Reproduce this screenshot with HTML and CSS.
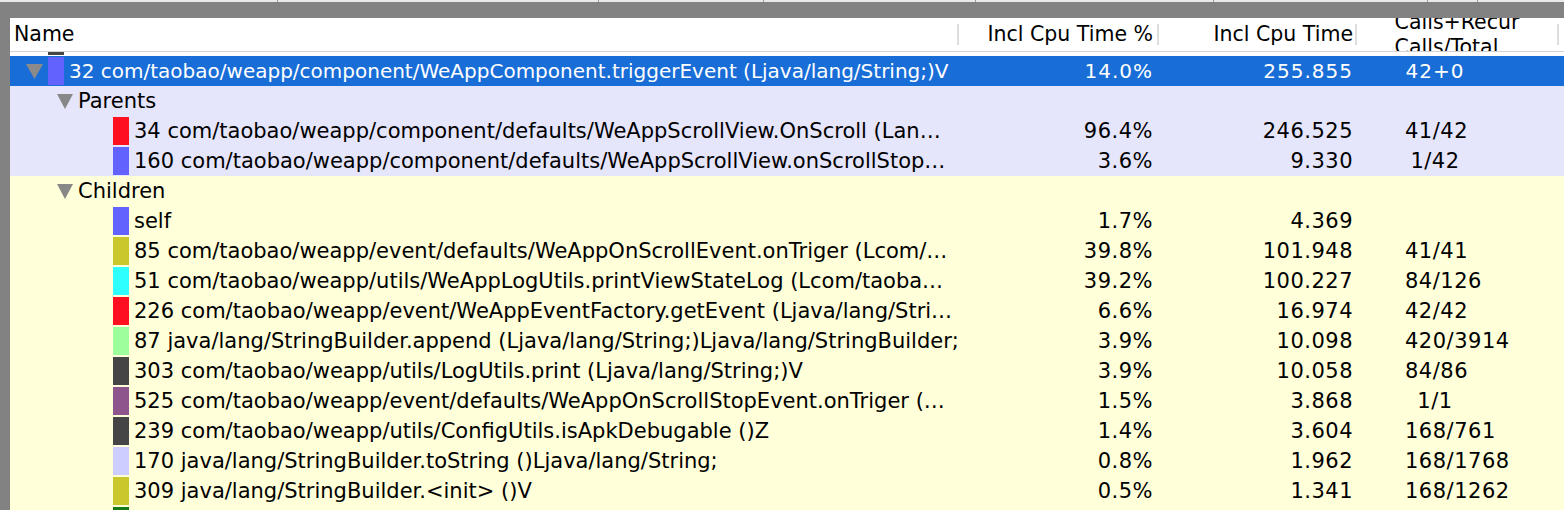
FILE: index.html
```html
<!DOCTYPE html>
<html>
<head>
<meta charset="utf-8">
<link rel="stylesheet" href="styles.css">
</head>
<body>
<div class="window">
  <div class="topstrip">
    <div class="seg s1"></div><div class="seg s2"></div><div class="seg s3"></div><div class="seg s4"></div><div class="seg s5"></div><div class="seg s6"></div><div class="seg s7"></div>
  </div>
  <div class="frame">
    <div class="table">
      <div class="header">
        <div class="hcell hname"><span>Name</span></div>
        <div class="hcell hnum1"><span>Incl Cpu Time %</span></div>
        <div class="hcell hnum2"><span>Incl Cpu Time</span></div>
        <div class="hcell hcalls"><span>Calls+Recur<br>Calls/Total</span></div>
        <div class="hcell hrest"></div>
      </div>
      <div class="body">
        <div class="rows">
          <div class="row plain">
            <div class="name l0"><span class="tog"></span><span class="sw c-dark"></span><span class="txt">28 com/taobao/weapp/component/WeAppComponent.onScrollEvent (Ljava/lang/String;)V</span></div>
            <div class="pct"></div><div class="tm"></div><div class="calls"></div>
          </div>
          <div class="row selected">
            <div class="name l0"><span class="tog"><svg width="17" height="15" viewBox="0 0 17 15"><polygon points="0,0 17,0 8.5,15" fill="#8a8a8a"/></svg></span><span class="sw c-blue"></span><span class="txt">32 com/taobao/weapp/component/WeAppComponent.triggerEvent (Ljava/lang/String;)V</span></div>
            <div class="pct">14.0%</div><div class="tm">255.855</div><div class="calls"><span>42+0</span></div>
          </div>
          <div class="row parents">
            <div class="name l1"><span class="tog"><svg width="16" height="15" viewBox="0 0 16 15"><polygon points="0,0 16,0 8,15" fill="#888888"/></svg></span><span class="txt">Parents</span></div>
            <div class="pct"></div><div class="tm"></div><div class="calls"></div>
          </div>
          <div class="row parents">
            <div class="name l2"><span class="tog"></span><span class="sw c-red"></span><span class="txt">34 com/taobao/weapp/component/defaults/WeAppScrollView.OnScroll (Lan…</span></div>
            <div class="pct">96.4%</div><div class="tm">246.525</div><div class="calls"><span>41/42</span></div>
          </div>
          <div class="row parents">
            <div class="name l2"><span class="tog"></span><span class="sw c-blue"></span><span class="txt">160 com/taobao/weapp/component/defaults/WeAppScrollView.onScrollStop…</span></div>
            <div class="pct">3.6%</div><div class="tm">9.330</div><div class="calls"><span>1/42</span></div>
          </div>
          <div class="row children">
            <div class="name l1"><span class="tog"><svg width="16" height="15" viewBox="0 0 16 15"><polygon points="0,0 16,0 8,15" fill="#888888"/></svg></span><span class="txt">Children</span></div>
            <div class="pct"></div><div class="tm"></div><div class="calls"></div>
          </div>
          <div class="row children">
            <div class="name l2"><span class="tog"></span><span class="sw c-blue"></span><span class="txt">self</span></div>
            <div class="pct">1.7%</div><div class="tm">4.369</div><div class="calls"></div>
          </div>
          <div class="row children">
            <div class="name l2"><span class="tog"></span><span class="sw c-olive"></span><span class="txt">85 com/taobao/weapp/event/defaults/WeAppOnScrollEvent.onTriger (Lcom/…</span></div>
            <div class="pct">39.8%</div><div class="tm">101.948</div><div class="calls"><span>41/41</span></div>
          </div>
          <div class="row children">
            <div class="name l2"><span class="tog"></span><span class="sw c-cyan"></span><span class="txt">51 com/taobao/weapp/utils/WeAppLogUtils.printViewStateLog (Lcom/taoba…</span></div>
            <div class="pct">39.2%</div><div class="tm">100.227</div><div class="calls"><span>84/126</span></div>
          </div>
          <div class="row children">
            <div class="name l2"><span class="tog"></span><span class="sw c-red"></span><span class="txt">226 com/taobao/weapp/event/WeAppEventFactory.getEvent (Ljava/lang/Stri…</span></div>
            <div class="pct">6.6%</div><div class="tm">16.974</div><div class="calls"><span>42/42</span></div>
          </div>
          <div class="row children">
            <div class="name l2"><span class="tog"></span><span class="sw c-mint"></span><span class="txt">87 java/lang/StringBuilder.append (Ljava/lang/String;)Ljava/lang/StringBuilder;</span></div>
            <div class="pct">3.9%</div><div class="tm">10.098</div><div class="calls"><span>420/3914</span></div>
          </div>
          <div class="row children">
            <div class="name l2"><span class="tog"></span><span class="sw c-dark"></span><span class="txt">303 com/taobao/weapp/utils/LogUtils.print (Ljava/lang/String;)V</span></div>
            <div class="pct">3.9%</div><div class="tm">10.058</div><div class="calls"><span>84/86</span></div>
          </div>
          <div class="row children">
            <div class="name l2"><span class="tog"></span><span class="sw c-purple"></span><span class="txt">525 com/taobao/weapp/event/defaults/WeAppOnScrollStopEvent.onTriger (…</span></div>
            <div class="pct">1.5%</div><div class="tm">3.868</div><div class="calls"><span>1/1</span></div>
          </div>
          <div class="row children">
            <div class="name l2"><span class="tog"></span><span class="sw c-dark"></span><span class="txt">239 com/taobao/weapp/utils/ConfigUtils.isApkDebugable ()Z</span></div>
            <div class="pct">1.4%</div><div class="tm">3.604</div><div class="calls"><span>168/761</span></div>
          </div>
          <div class="row children">
            <div class="name l2"><span class="tog"></span><span class="sw c-lilac"></span><span class="txt">170 java/lang/StringBuilder.toString ()Ljava/lang/String;</span></div>
            <div class="pct">0.8%</div><div class="tm">1.962</div><div class="calls"><span>168/1768</span></div>
          </div>
          <div class="row children">
            <div class="name l2"><span class="tog"></span><span class="sw c-olive"></span><span class="txt">309 java/lang/StringBuilder.&lt;init&gt; ()V</span></div>
            <div class="pct">0.5%</div><div class="tm">1.341</div><div class="calls"><span>168/1262</span></div>
          </div>
          <div class="row children">
            <div class="name l2"><span class="tog"></span><span class="sw c-green"></span><span class="txt">44 java/lang/String.length ()I</span></div>
            <div class="pct">0.3%</div><div class="tm">0.812</div><div class="calls"><span>84/900</span></div>
          </div>
        </div>
      </div>
    </div>
  </div>
</div>
</body>
</html>
```
FILE: styles.css
```css
* { box-sizing: border-box; }
html, body { margin: 0; padding: 0; }
body {
  width: 1564px;
  height: 510px;
  overflow: hidden;
  font-family: "DejaVu Sans", "Liberation Sans", sans-serif;
  font-size: 20px;
  color: #000;
  background: #828282;
}
.window {
  height: 510px;
  display: flex;
  flex-direction: column;
}
.topstrip {
  height: 2px;
  display: flex;
  background: #e9e9e9;
}
.seg { height: 2px; border-right: 1px solid #9a9a9a; }
.s1 { width: 278px; }
.s2 { width: 321px; }
.s3 { width: 165px; }
.s4 { width: 212px; }
.s5 { width: 238px; }
.s6 { width: 214px; }
.s7 { width: 50px; }

.frame {
  flex: 1;
  padding: 16px 0 0 10px;
  background: #828282;
  display: flex;
  min-height: 0;
}
.table {
  flex: 1;
  display: flex;
  flex-direction: column;
  min-height: 0;
  background: #fff;
}
.header {
  height: 34px;
  flex: none;
  display: grid;
  grid-template-columns: 949px 200px 198px 202px 1fr;
  grid-template-rows: 33px;
  border-bottom: 1px solid #d2d2d2;
  background: #fff;
  overflow: hidden;
  font-size: 20.5px;
}
.hcell {
  height: 21px;
  margin: 6px 0;
  border-right: 2px solid #dedede;
  display: flex;
  align-items: center;
  white-space: nowrap;
  line-height: 25px;
}
.hname { padding-left: 4px; }
.hnum1 { justify-content: flex-end; padding-right: 4px; }
.hnum2 { justify-content: flex-end; padding-right: 2px; }
.hcalls { justify-content: center; }
.hcalls span { flex: none; }
.hrest { border-right: none; }

.body {
  flex: 1;
  overflow: hidden;
  min-height: 0;
}
.rows { margin-top: -26px; }
.row {
  height: 30px;
  display: grid;
  grid-template-columns: 949px 200px 198px 202px 1fr;
  align-items: center;
  white-space: nowrap;
  font-size: 21px;
}
.plain { background: #fff; }
.selected { background: #186dd7; color: #fff; font-size: 20px; }
.parents { background: #e5e5fb; }
.children { background: #ffffd9; }

.name {
  display: flex;
  align-items: center;
  height: 30px;
  overflow: hidden;
}
.l0 { padding-left: 16px; }
.l1 { padding-left: 47px; }
.l2 { padding-left: 81px; }
.tog {
  width: 22px;
  flex: none;
  display: flex;
  align-items: center;
  height: 15px;
}
.tog svg { display: block; }
.l1 .tog { width: 21px; }
.sw {
  width: 16px;
  height: 28px;
  flex: none;
  margin-right: 5px;
}
.txt { line-height: 30px; }
.pct, .tm, .calls { letter-spacing: 0.5px; }
.selected .pct, .selected .tm, .selected .calls { letter-spacing: 1px; }
.pct { text-align: right; padding-right: 6px; }
.tm { text-align: right; padding-right: 4px; }
.calls { padding-left: 48px; }
.calls span { display: block; width: 60px; text-align: center; }

.c-blue { background: #6262ff; }
.c-red { background: #ff1020; }
.c-olive { background: #c9c72c; }
.c-cyan { background: #2effff; }
.c-mint { background: #9cff9c; }
.c-dark { background: #454545; }
.c-purple { background: #8d558c; }
.c-lilac { background: #cdcdff; }
.c-green { background: #157a15; }
```
